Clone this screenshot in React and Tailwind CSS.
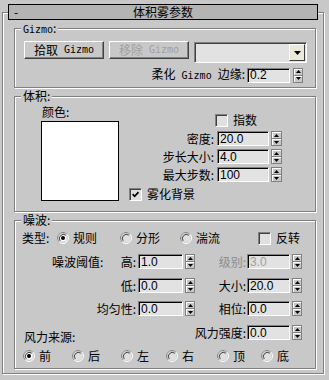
import React from 'react';

const Gz = ({ className = '' }) => (
  <span className={`font-['DejaVu_Sans_Mono',monospace] text-[10px] ${className}`}>Gizmo</span>
);

const Field = ({ value, className = 'w-[45px]', disabled = false }) => (
  <div
    className={`h-[15px] ${className} flex items-center bg-[#e2e2e2] border border-t-[#808080] border-l-[#808080] border-r-white border-b-white shadow-[inset_1px_1px_0_#000] pl-[2px] font-['Liberation_Sans',sans-serif] text-[12px] leading-none ${disabled ? 'text-[#a0a0a0]' : 'text-black'}`}
  >
    {value}
  </div>
);

const Spinner = ({ className = '' }) => (
  <div className={`flex flex-col h-[15px] border border-[#808080] bg-[#c8c8c8] ${className}`}>
    <div className="flex-1 flex items-center justify-center border-b border-[#808080] shadow-[inset_1px_1px_0_#fff]">
      <svg width="5" height="3" viewBox="0 0 5 3"><path d="M2.5 0L5 3H0z" fill="#000" /></svg>
    </div>
    <div className="flex-1 flex items-center justify-center shadow-[inset_1px_1px_0_#fff]">
      <svg width="5" height="3" viewBox="0 0 5 3"><path d="M0 0H5L2.5 3z" fill="#000" /></svg>
    </div>
  </div>
);

const Radio = ({ on = false }) => (
  <svg width="12" height="12" viewBox="0 0 12 12" className="shrink-0">
    <circle cx="6" cy="6" r="5.5" fill="none" stroke="#fff" />
    <path d="M2.1 9.9A5.5 5.5 0 0 1 9.9 2.1" fill="none" stroke="#808080" />
    <circle cx="6" cy="6" r="4" fill={on ? '#fff' : '#e0e0e0'} stroke="#dfdfdf" />
    <path d="M3.2 8.8A4 4 0 0 1 8.8 3.2" fill="none" stroke="#404040" />
    {on && <circle cx="6" cy="6" r="2" fill="#000" />}
  </svg>
);

const Check = ({ on = false }) => (
  <div className="w-[13px] h-[13px] shrink-0 flex items-center justify-center border border-t-[#808080] border-l-[#808080] border-r-white border-b-white bg-[#e0e0e0] shadow-[inset_1px_1px_0_#404040]">
    {on && (
      <svg width="7" height="7" viewBox="0 0 7 7">
        <path d="M0.6 3.2L2.6 5.3L6.5 1.2" fill="none" stroke="#000" strokeWidth="1.7" />
      </svg>
    )}
  </div>
);

const Btn = ({ children, disabled = false }) => (
  <div
    className={`w-[80px] h-[18px] flex items-center justify-center border border-t-white border-l-white border-r-[#404040] border-b-[#404040] shadow-[inset_-1px_-1px_0_#808080] ${disabled ? 'text-[#a0a0a0]' : 'text-black'}`}
  >
    {children}
  </div>
);

const Group = ({ label, className, children }) => (
  <div className={`relative ml-[11px] mt-[8px] w-[302px] border border-[#808080] shadow-[inset_1px_1px_0_#fff,1px_1px_0_#fff] ${className}`}>
    <span className="absolute -top-[8px] left-[6px] bg-[#c8c8c8] px-[2px] leading-[14px]">{label}</span>
    {children}
  </div>
);

const RadioItem = ({ label, on, w }) => (
  <div className={`flex items-center ${w}`}>
    <Radio on={on} />
    <span className="ml-[4px]">{label}</span>
  </div>
);

// one row of the noise block: label / field+spinner / label / field+spinner
const NoiseRow = ({ left, v1, label2, v2, dis2 = false, className = '' }) => (
  <div className={`h-[15px] flex items-center ${className}`}>
    <div className="w-[123px] flex justify-end">{left}</div>
    <Field value={v1} className="w-[45px]" />
    <Spinner className="ml-[2px] w-[10px]" />
    <div className={`w-[52px] flex justify-end ${dis2 ? 'text-[#8c8c8c]' : ''}`}>{label2}</div>
    <Field value={v2} className="w-[43px]" disabled={dis2} />
    <Spinner className="ml-[2px] w-[10px]" />
  </div>
);

export default function App() {
  return (
    <div className="w-[329px] h-[380px] bg-[#c8c8c8] pt-[12px] pl-[2px] text-[12px] leading-[14px] text-black font-['Noto_Sans_CJK_SC',sans-serif] overflow-hidden">
      <div className="w-[322px] h-[362px] border border-[#808080] shadow-[inset_1px_1px_0_#fff,1px_1px_0_#fff]">
        {/* rollout title */}
        <div className="-mt-[9px] ml-[5px] w-[310px] h-[16px] flex items-center bg-[#b4b4b4] border border-black">
          <span className="w-[24px] pl-[5px]">-</span>
          <span className="flex-1 text-center">体积雾参数</span>
          <span className="w-[24px]" />
        </div>

        {/* Gizmo */}
        <Group label={<><Gz />:</>} className="h-[60px]">
          <div className="flex items-start pl-[9px] pt-[12px] gap-[5px]">
            <Btn>拾取<Gz className="ml-[6px]" /></Btn>
            <Btn disabled>移除<Gz className="ml-[6px]" /></Btn>
            <div className="mt-[1px] w-[113px] h-[21px] flex items-center justify-end pr-[1px] bg-[#e2e2e2] border border-t-[#808080] border-l-[#808080] border-r-white border-b-white shadow-[inset_1px_1px_0_#404040]">
              <div className="w-[16px] h-[17px] flex items-center justify-center bg-[#ece9d8] border border-t-white border-l-white border-r-[#404040] border-b-[#404040]">
                <svg width="7" height="4" viewBox="0 0 7 4"><path d="M0 0H7L3.5 4z" fill="#000" /></svg>
              </div>
            </div>
          </div>
          <div className="mt-[4px] pr-[12px] flex items-center justify-end">
            <span>柔化<Gz className="mx-[6px]" />边缘:</span>
            <Field value="0.2" className="w-[43px] ml-[2px]" />
            <Spinner className="ml-[3px] w-[10px]" />
          </div>
        </Group>

        {/* 体积 */}
        <Group label="体积:" className="h-[116px]">
          <div className="flex">
            <div className="ml-[26px] mt-[8px] flex flex-col">
              <span className="ml-[1px]">颜色:</span>
              <div className="mt-[2px] w-[78px] h-[80px] bg-white border border-black" />
            </div>
            <div className="ml-[10px] mt-[16px] w-[153px] flex flex-col">
              <div className="h-[14px] flex items-center pl-[86px]">
                <Check />
                <span className="ml-[5px]">指数</span>
              </div>
              <div className="mt-[4px] flex flex-col gap-[3px]">
                {[
                  ['密度:', '20.0'],
                  ['步长大小:', '4.0'],
                  ['最大步数:', '100'],
                ].map(([l, v]) => (
                  <div key={l} className="h-[15px] flex items-center justify-end">
                    <span className="mr-[3px]">{l}</span>
                    <Field value={v} className="w-[52px]" />
                    <Spinner className="ml-[2px] w-[11px]" />
                  </div>
                ))}
              </div>
              <div className="mt-[5px] h-[14px] flex items-center">
                <Check on />
                <span className="ml-[5px]">雾化背景</span>
              </div>
            </div>
          </div>
        </Group>

        {/* 噪波 */}
        <Group label="噪波:" className="h-[149px]">
          <div className="mt-[10px] h-[14px] flex items-center pl-[7px]">
            <span className="w-[35px]">类型:</span>
            <RadioItem label="规则" on w="w-[63px]" />
            <RadioItem label="分形" w="w-[60px]" />
            <RadioItem label="湍流" w="w-[78px]" />
            <div className="flex items-center">
              <Check />
              <span className="ml-[5px]">反转</span>
            </div>
          </div>

          <NoiseRow
            className="mt-[9px]"
            left={<div className="w-full flex justify-between pl-[37px] pr-[2px]"><span>噪波阈值:</span><span>高:</span></div>}
            v1="1.0"
            label2={<span className="mr-[1px]">级别:</span>}
            v2="3.0"
            dis2
          />
          <NoiseRow
            className="mt-[9px]"
            left={<span className="mr-[2px]">低:</span>}
            v1="0.0"
            label2={<span className="mr-[1px]">大小:</span>}
            v2="20.0"
          />
          <NoiseRow
            className="mt-[8px]"
            left={<span className="mr-[2px]">均匀性:</span>}
            v1="0.0"
            label2={<span className="mr-[1px]">相位:</span>}
            v2="0.0"
          />

          <div className="mt-[9px] flex items-start">
            <span className="mt-[5px] pl-[9px]">风力来源:</span>
            <div className="ml-auto pr-[13px] h-[15px] flex items-center">
              <span className="mr-[1px]">风力强度:</span>
              <Field value="0.0" className="w-[43px]" />
              <Spinner className="ml-[2px] w-[10px]" />
            </div>
          </div>

          <div className="mt-[5px] h-[13px] flex items-center pl-[8px]">
            <RadioItem label="前" on w="w-[49px]" />
            <RadioItem label="后" w="w-[49px]" />
            <RadioItem label="左" w="w-[45px]" />
            <RadioItem label="右" w="w-[51px]" />
            <RadioItem label="顶" w="w-[44px]" />
            <RadioItem label="底" w="w-[40px]" />
          </div>
        </Group>
      </div>
    </div>
  );
}
